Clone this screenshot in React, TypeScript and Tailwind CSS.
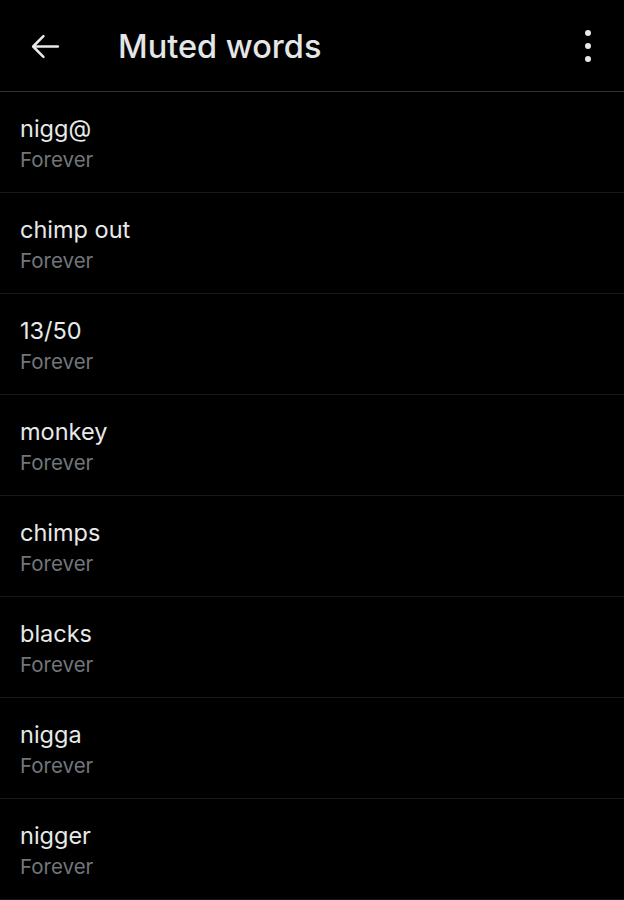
import React from "react";

const words = ["nigg@", "chimp out", "13/50", "monkey", "chimps", "blacks", "nigga", "nigger"];

export default function App() {
  return (
    <div className="w-[624px] h-[900px] overflow-hidden bg-black" style={{ fontFamily: "Inter, 'Noto Sans', sans-serif" }}>
      <div className="h-[92px] flex items-center border-b border-[#2f3336] relative">
        <div className="w-[118px] pl-[29px] flex items-center mt-[2px]">
          <svg width="33" height="33" viewBox="0 0 24 24" fill="none" stroke="#e7e9ea" strokeWidth="1.8" strokeLinecap="round" strokeLinejoin="round">
            <path d="M21 12H3.5" />
            <path d="M10.5 4.5L3 12l7.5 7.5" />
          </svg>
        </div>
        <div className="text-[32.5px] font-medium text-[#e4e6e7] tracking-[0px] mt-[3px]">Muted words</div>
        <div className="ml-auto mr-[33px] flex flex-col gap-[7px] items-center">
          <div className="w-[6px] h-[6px] rounded-full bg-[#e7e9ea]" />
          <div className="w-[6px] h-[6px] rounded-full bg-[#e7e9ea]" />
          <div className="w-[6px] h-[6px] rounded-full bg-[#e7e9ea]" />
        </div>
      </div>
      {words.map((w) => (
        <div key={w} className="h-[101px] border-b border-[#16181c] pl-[20px] pt-[22px] flex flex-col">
          <div className="text-[23.5px] leading-[30px] text-[#e7e9ea]">{w}</div>
          <div className="text-[20.5px] leading-[32px] text-[#71767b]">Forever</div>
        </div>
      ))}
    </div>
  );
}
